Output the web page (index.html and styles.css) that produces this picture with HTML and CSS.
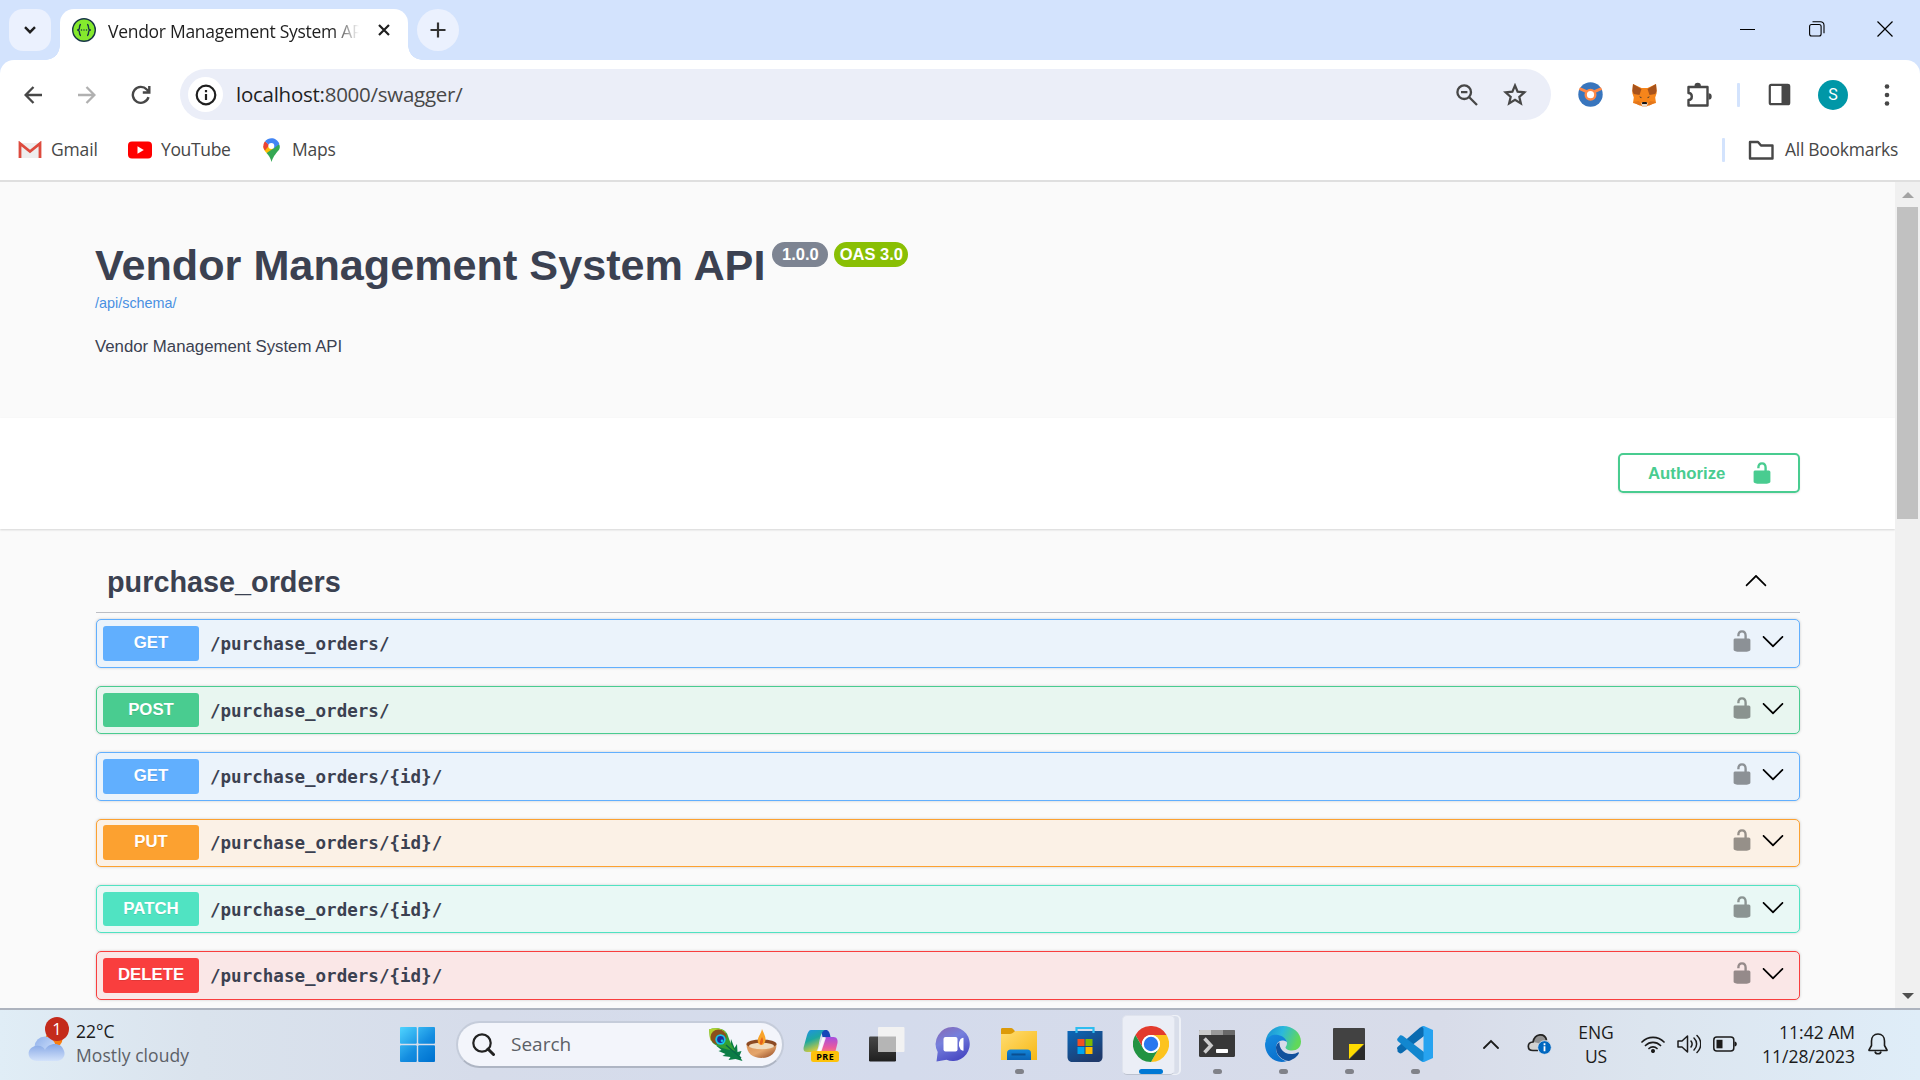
FILE: index.html
```html
<!DOCTYPE html>
<html lang="en">
<head>
<meta charset="utf-8">
<title>Vendor Management System API</title>
<link rel="stylesheet" href="styles.css">
</head>
<body>
<svg class="defs" width="0" height="0" aria-hidden="true">
  <symbol id="unlocked" viewBox="0 0 20 20"><path d="M15.8 8H14V5.6C14 2.703 12.665 1 10 1 7.334 1 6 2.703 6 5.6V6h2v-.801C8 3.754 8.797 3 10 3c1.203 0 2 .754 2 2.199V8H4c-.553 0-1 .646-1 1.199V17c0 .549.428 1.139.951 1.307l1.197.387C5.672 18.861 6.55 19 7.1 19h5.8c.549 0 1.428-.139 1.951-.307l1.196-.387c.524-.167.953-.757.953-1.306V9.199C17 8.646 16.352 8 15.8 8z"/></symbol>
  <symbol id="down" viewBox="0 0 20 20"><path d="M17.418 6.109c.272-.268.709-.268.979 0s.271.701 0 .969l-7.908 7.83c-.27.268-.707.268-.979 0l-7.908-7.83c-.27-.268-.27-.701 0-.969.271-.268.709-.268.979 0L10 13.25l7.418-7.141z"/></symbol>
  <symbol id="up" viewBox="0 0 20 20"><path d="M17.418 14.908c.272.27.709.27.979 0s.271-.697 0-.969l-7.908-7.83c-.27-.268-.707-.268-.979 0l-7.908 7.83c-.27.271-.27.699 0 .969.271.27.709.27.979 0L10 7.767l7.418 7.141z"/></symbol>
</svg>

<header class="tabstrip">
  <div class="tab-search"><svg width="12" height="8" viewBox="0 0 12 8"><path d="M1 1.2l5 5 5-5" fill="none" stroke="#1f1f1f" stroke-width="2.4"/></svg></div>
  <div class="tab">
    <svg width="24" height="24" viewBox="0 0 24 24"><circle cx="12" cy="12" r="11.3" fill="#85ea2d" stroke="#173647" stroke-width="1.4"/><path d="M9 6.500C6.800 6.500 8 10.500 7 11.300 6.600 11.700 6.200 12 5.200 12c1 0 1.400.300 1.800.700C8 13.500 6.800 17.500 9 17.500M15 6.500c2.200 0 1 4 2 4.800.4.400.8.700 1.800.700-1 0-1.400.300-1.800.700-1 .8.200 4.800-2 4.800" fill="none" stroke="#173647" stroke-width="1.400"/><g fill="#173647"><circle cx="9.500" cy="12" r=".75"/><circle cx="12" cy="12" r=".75"/><circle cx="14.500" cy="12" r=".75"/></g></svg>
    <span class="tab-title">Vendor Management System API</span>
    <svg class="tab-close" width="12" height="12" viewBox="0 0 12 12"><path d="M1 1l10 10M11 1L1 11" stroke="#1f1f1f" stroke-width="2.200"/></svg>
  </div>
  <div class="new-tab"><svg width="16" height="16" viewBox="0 0 16 16"><path d="M8 .5v15M.5 8h15" stroke="#333" stroke-width="2.200"/></svg></div>
  <div class="window-buttons">
    <svg width="16" height="16" viewBox="0 0 16 16"><path d="M0 8.500h15" stroke="#000"/></svg>
    <svg width="16" height="16" viewBox="0 0 16 16" fill="none" stroke="#000" stroke-width="1.100"><rect x=".6" y="3.500" width="11.500" height="11.500" rx="2"/><path d="M3.500.7h8a3.500 3.500 0 0 1 3.500 3.500v8"/></svg>
    <svg width="16" height="16" viewBox="0 0 16 16"><path d="M.5.500l15 15M15.500.500l-15 15" stroke="#000" stroke-width="1.200"/></svg>
  </div>
</header>

<section class="browser">
  <div class="toolbar">
    <div class="nav">
      <svg width="18" height="18" viewBox="0 0 18 18" fill="none" stroke="#474747" stroke-width="2.300"><path d="M18 9H2M9.500 1L1.600 9l7.900 8"/></svg>
      <svg width="18" height="18" viewBox="0 0 18 18" fill="none" stroke="#b0b0b0" stroke-width="2.300"><path d="M0 9h16M8.500 1l7.900 8-7.900 8"/></svg>
      <svg width="20" height="20" viewBox="0 0 20 20" fill="none" stroke="#474747" stroke-width="2.400"><path d="M17.500 12.200A8 8 0 1 1 15.800 4.500L17.500 6.300M18.300 1v6.500h-6.500"/></svg>
    </div>
    <div class="omnibox">
      <div class="site-info"><svg width="22" height="22" viewBox="0 0 22 22"><circle cx="11" cy="11" r="9.300" fill="none" stroke="#1f1f1f" stroke-width="2.200"/><path d="M11 10v6M11 6v2.200" stroke="#1f1f1f" stroke-width="2.200"/></svg></div>
      <span class="url"><b>localhost:</b>8000/swagger/</span>
      <svg width="22" height="22" viewBox="0 0 22 22" fill="none" stroke="#474747" stroke-width="2.300"><circle cx="8.200" cy="8.200" r="6.800"/><path d="M13 13l8 8M5 8.200h6.400"/></svg>
      <svg class="star" width="24" height="24" viewBox="0 0 24 24" fill="none" stroke="#474747" stroke-width="2.200"><path d="M12 2.500l2.600 6.200 6.900.6-5.200 4.500 1.600 6.700-5.900-3.600-5.900 3.600 1.600-6.700-5.200-4.500 6.900-.6z"/></svg>
    </div>
    <div class="extensions">
      <svg width="25" height="25" viewBox="0 0 25 25"><circle cx="12.500" cy="12.500" r="12.200" fill="#3875bd"/><path d="M1.500 6.500l7 3.200M23.500 6.500l-7 3.200" stroke="#ff8947" stroke-width="3"/><circle cx="12.500" cy="12.700" r="4.800" fill="#fff" stroke="#ff8947" stroke-width="2.400"/></svg>
      <svg width="25" height="24" viewBox="0 0 25 24"><path d="M1 1l8.500 4h6L24 1l.7 9-1.500 4.500L24 20l-6.500 2-3 1.500h-4L7.500 22 1 20l.8-5.500L.300 10z" fill="#f6851b"/><path d="M1 1l8.500 5L7.500 12 1.800 11 .300 8zM24 1l-8.500 5 2 6 5.700-1 1.500-3z" fill="#a8531b"/><path d="M1 19l6-1 2.500 4-2 .5zM24 19l-6-1-2.500 4 2 .5z" fill="#e2761b"/><path d="M9.300 20.500l1-1.500h4.400l1 1.500-1 3h-4.400z" fill="#e5d8cc"/><path d="M10.300 19h4.400l.3 2h-5z" fill="#161616"/><path d="M7 13.500l2.500.5-.3 1.300zM18 13.500l-2.500.5.3 1.300z" fill="#333"/></svg>
      <svg width="26" height="26" viewBox="0 0 26 26"><path d="M2.500 5h19v18.500h-19v-5.500c2 0 3.300-1.600 3.300-3.500S4.500 11 2.500 11z" fill="none" stroke="#474747" stroke-width="2.400" stroke-linejoin="round"/><path d="M8.500 4a3.200 3.200 0 0 1 6.400 0zM22.500 11.200a3.200 3.200 0 0 1 0 6.400z" fill="#474747"/></svg>
      <i class="divider"></i>
      <svg width="23" height="23" viewBox="0 0 23 23"><rect x="1.800" y="1.800" width="19.400" height="19.400" rx="1.500" fill="none" stroke="#474747" stroke-width="2.200"/><path d="M13.500 1.500h8v20h-8z" fill="#474747"/></svg>
      <span class="avatar">S</span>
      <svg width="6" height="24" viewBox="0 0 6 24" fill="#474747"><circle cx="3" cy="3.500" r="2.300"/><circle cx="3" cy="12" r="2.300"/><circle cx="3" cy="20.500" r="2.300"/></svg>
    </div>
  </div>
  <div class="bookmarks">
    <svg width="24" height="18" viewBox="0 0 24 18"><path d="M2 2h20v15H2z" fill="#eee"/><path d="M2 17V2.500l10 8 10-8V17" fill="none" stroke="#dd4b3e" stroke-width="2.800"/></svg>
    <span class="bm-gmail">Gmail</span>
    <svg width="24" height="18" viewBox="0 0 24 18"><rect y=".5" width="24" height="17" rx="4" fill="#f00"/><path d="M9.500 5.300v7.400L15.800 9z" fill="#fff"/></svg>
    <span class="bm-youtube">YouTube</span>
    <svg width="17" height="24" viewBox="0 0 17 24"><path d="M14.500 13.500C11 18 10 19.500 8.500 24 7.500 20 6 17.500 3.500 15l9-10 3.800 1.500c1.200 3 .2 5-1.800 7z" fill="#34a853"/><path d="M3.500 15C1 12 .2 10.500.300 8l5.500-.3 5 2.500z" fill="#fbbc04"/><path d="M.300 8c.2-2.500 1-4 1.800-4.800L6.500 7 2 12.500C.8 11 .300 9.500.300 8z" fill="#ea4335"/><path d="M2 3.200C6-1.200 13.800-.8 16.300 6L11 10.500 5.500 6.500z" fill="#4285f4"/><circle cx="8.300" cy="8" r="3" fill="#fff"/></svg>
    <span class="bm-maps">Maps</span>
    <i class="divider bm-divider"></i>
    <svg width="26" height="20" viewBox="0 0 26 20"><path d="M2 2h8l3 3.500h11.500V18.500H2z" fill="none" stroke="#474747" stroke-width="2.400" stroke-linejoin="round"/></svg>
    <span class="bm-all">All Bookmarks</span>
  </div>
</section>

<div class="viewport">
  <main class="page">
    <section class="info">
      <h1><span>Vendor Management System API</span><small class="version">1.0.0</small><small class="oas">OAS 3.0</small></h1>
      <a class="schema">/api/schema/</a>
      <p>Vendor Management System API</p>
    </section>
    <section class="auth">
      <button class="authorize"><span>Authorize</span><svg width="24" height="24"><use href="#unlocked"/></svg></button>
    </section>
    <section class="operations">
      <h2><span>purchase_orders</span><svg width="24" height="24"><use href="#up"/></svg></h2>
      <div class="op get"><span class="method">GET</span><span class="path">/purchase_orders/</span><svg class="lock"><use href="#unlocked"/></svg><svg class="arrow"><use href="#down"/></svg></div>
      <div class="op post"><span class="method">POST</span><span class="path">/purchase_orders/</span><svg class="lock"><use href="#unlocked"/></svg><svg class="arrow"><use href="#down"/></svg></div>
      <div class="op get"><span class="method">GET</span><span class="path">/purchase_orders/{id}/</span><svg class="lock"><use href="#unlocked"/></svg><svg class="arrow"><use href="#down"/></svg></div>
      <div class="op put"><span class="method">PUT</span><span class="path">/purchase_orders/{id}/</span><svg class="lock"><use href="#unlocked"/></svg><svg class="arrow"><use href="#down"/></svg></div>
      <div class="op patch"><span class="method">PATCH</span><span class="path">/purchase_orders/{id}/</span><svg class="lock"><use href="#unlocked"/></svg><svg class="arrow"><use href="#down"/></svg></div>
      <div class="op delete"><span class="method">DELETE</span><span class="path">/purchase_orders/{id}/</span><svg class="lock"><use href="#unlocked"/></svg><svg class="arrow"><use href="#down"/></svg></div>
    </section>
  </main>
  <aside class="scrollbar">
    <svg width="12" height="6" viewBox="0 0 12 6"><path d="M0 6l6-6 6 6z" fill="#a3a3a3"/></svg>
    <div class="thumb"></div>
    <svg class="scroll-down" width="12" height="6" viewBox="0 0 12 6"><path d="M0 0l6 6 6-6z" fill="#505050"/></svg>
  </aside>
</div>

<footer class="taskbar">
  <div class="weather">
    <div class="weather-icon">
      <svg width="38" height="32" viewBox="0 0 38 32"><defs><linearGradient id="cl" x1="0" y1="0" x2="1" y2="1"><stop offset="0" stop-color="#8fb0ea"/><stop offset=".5" stop-color="#b4ccf4"/><stop offset="1" stop-color="#dbe8fc"/></linearGradient><linearGradient id="cl2" x1="0" y1="0" x2="0" y2="1"><stop offset="0" stop-color="#86a8e6"/><stop offset="1" stop-color="#d3e2fa"/></linearGradient></defs><circle cx="26" cy="8" r="8.500" fill="#f77f12"/><circle cx="17" cy="16" r="10.500" fill="url(#cl)"/><path d="M8 15c4-1 8 1 9 4 3-7 16-9 19 1 2 5-2 10-8 10H9C-2 30-2 16 8 15z" fill="url(#cl2)"/></svg>
      <span class="alert">1</span>
    </div>
    <div class="weather-text"><span>22°C</span><span>Mostly cloudy</span></div>
  </div>
  <svg class="start" width="35" height="35" viewBox="0 0 35 35"><defs><linearGradient id="win" gradientUnits="userSpaceOnUse" x1="0" y1="0" x2="30" y2="35"><stop offset="0" stop-color="#4fd4ff"/><stop offset=".6" stop-color="#148de0"/><stop offset="1" stop-color="#0074d1"/></linearGradient></defs><g fill="url(#win)"><rect width="16.800" height="16.800" rx="1"/><rect x="18.200" width="16.800" height="16.800" rx="1"/><rect y="18.200" width="16.800" height="16.800" rx="1"/><rect x="18.200" y="18.200" width="16.800" height="16.800" rx="1"/></g></svg>
  <div class="search">
    <svg width="23" height="23" viewBox="0 0 23 23" fill="none" stroke="#222"><circle cx="10" cy="10" r="8.700" stroke-width="2.200"/><path d="M16 16l5.500 5.500" stroke-width="3" stroke-linecap="round"/></svg>
    <span>Search</span>
    <svg width="35" height="33" viewBox="0 0 35 33"><path d="M18 10l4.500 7 .5-6 3.500 9 2.500-4 .5 8 4-1-2 5 3 5-7-2-7 1 2-3-8-1 3-2-7-3 3-1-5-4z" fill="#0b7d45"/><path d="M1 1.500C8-1 18 0 20 8c2 6 4 10 7 15-9-2-16-3-21-7C1 12 2 7 1 1.500z" fill="#35a033"/><path d="M1 1.500C7-1 15 0 18 5L3 13C1 10 2 6 1 1.500z" fill="#b5d32c"/><ellipse cx="10.500" cy="9" rx="8" ry="7.500" fill="#8a501c"/><circle cx="12.500" cy="11.500" r="5.200" fill="#16c5e8"/><circle cx="12.500" cy="11.500" r="3.400" fill="#1d2c9b"/><circle cx="14" cy="12.800" r="1.300" fill="#16c5e8"/><path d="M18 17l15 13" stroke="#0a6a48" stroke-width="1.500"/></svg>
    <svg width="31" height="31" viewBox="0 0 31 31"><defs><linearGradient id="bowl" x1="0" y1="0" x2="1" y2="1"><stop offset="0" stop-color="#dc9558"/><stop offset=".5" stop-color="#e4a56c"/><stop offset="1" stop-color="#8d431f"/></linearGradient></defs><path d="M.500 15c0 9 6 14 15 14s15-5 15-14z" fill="url(#bowl)"/><ellipse cx="15.500" cy="15" rx="15" ry="4.500" fill="#8b4a24"/><ellipse cx="15.500" cy="17" rx="12.500" ry="3.300" fill="#f0dcc0"/><path d="M16 0c2 5 4 8 3.500 11-.3 3-2 5-4.200 5-2.800 0-4.300-3-3.300-6C12.500 7 15 5 16 0z" fill="#f8a32a"/><path d="M16 8c2 4 1 6-1 8-2-2-1-4 1-8z" fill="#e8641b"/></svg>
  </div>
  <nav class="apps">
    <div class="app"><svg width="36" height="36" viewBox="0 0 36 36"><defs><linearGradient id="cp1" x1="0" y1="0" x2=".4" y2="1"><stop offset="0" stop-color="#2090e8"/><stop offset=".5" stop-color="#1da8a0"/><stop offset="1" stop-color="#d9cc3a"/></linearGradient><linearGradient id="cp2" x1="0" y1="0" x2="0" y2="1"><stop offset="0" stop-color="#a44ee0"/><stop offset=".6" stop-color="#ec5b9c"/><stop offset="1" stop-color="#f89a5b"/></linearGradient></defs><path d="M18 4h5c2.500 0 3.500 2 4.500 7h-8z" fill="#1647b8"/><path d="M8 4h14c-3 1-4.500 5-6 13-1 6-2 9-5 9H4c-3.500 0-4-3-3-6L4 9c1-3 2-5 4-5z" fill="url(#cp1)"/><path d="M22 11h8.500c3.500 0 4.500 3 4 6l-2 8c-1 3-2 4-5 4H15c3-1 5-12 7-18z" fill="url(#cp2)"/><path d="M19.500 11.500h3.500L18.500 25h-4z" fill="#fff" opacity=".85"/><rect x="8" y="25" width="28" height="11" rx="2.500" fill="#fdc20a"/><text x="22.300" y="34" text-anchor="middle" class="pre">PRE</text></svg></div>
    <div class="app"><svg width="36" height="36" viewBox="0 0 36 36"><defs><linearGradient id="tv" x1="0" y1="0" x2="0" y2="1"><stop offset="0" stop-color="#474747"/><stop offset="1" stop-color="#202020"/></linearGradient></defs><rect y="10.500" width="27" height="25" rx="1.200" fill="url(#tv)"/><rect x="9" y="1" width="26.500" height="25" rx="1" fill="#f2f2f2"/><rect x="9" y="10.500" width="18" height="15.500" fill="#b5b5b5"/></svg></div>
    <div class="app"><svg width="36" height="36" viewBox="0 0 36 36"><defs><linearGradient id="chat" x1="0" y1="0" x2=".5" y2="1"><stop offset="0" stop-color="#8866b0"/><stop offset=".45" stop-color="#7680dd"/><stop offset="1" stop-color="#4b4cc4"/></linearGradient></defs><path d="M18.500 1a17 17 0 1 1-7 32.800L1.500 35.500l1.200-9.500A17 17 0 0 1 18.500 1z" fill="url(#chat)"/><rect x="8.500" y="11" width="14" height="14.500" rx="2" fill="#fff"/><path d="M24 16.500l1.500-3.500q3-2 3-1v12.500q0 1-3-1L24 20z" fill="#fff"/></svg></div>
    <div class="app running"><svg width="36" height="36" viewBox="0 0 36 36"><defs><linearGradient id="fe" x1="0" y1="0" x2="1" y2="1"><stop offset="0" stop-color="#ffdd73"/><stop offset="1" stop-color="#f7b814"/></linearGradient><linearGradient id="fb" x1="0" y1="0" x2="0" y2="1"><stop offset="0" stop-color="#1285d8"/><stop offset="1" stop-color="#0b63b5"/></linearGradient></defs><path d="M0 3.500C0 2.500.5 2 1.500 2H10c1.500 0 2.500 1 4.500 4.500L10 9H0z" fill="#dc9a08"/><path d="M0 8h9c3 0 4-3 6-3h21v29H0z" fill="url(#fe)"/><path d="M6 34V27c0-2 1.500-3.500 3.500-3.500h17c2 0 3.500 1.500 3.500 3.500v7z" fill="url(#fb)"/><path d="M10.500 28.500h14" stroke="#0a4f91" stroke-width="2"/></svg></div>
    <div class="app"><svg width="36" height="36" viewBox="0 0 36 36"><defs><linearGradient id="st" x1="0" y1="0" x2=".6" y2="1"><stop offset="0" stop-color="#0b68b9"/><stop offset="1" stop-color="#1f3a6b"/></linearGradient></defs><path d="M.5 5h35v26c0 3-2 5-5 5h-25c-3 0-5-2-5-5z" fill="url(#st)"/><path d="M9.500 7V2h17v5" fill="none" stroke="#2dbdf0" stroke-width="2.200"/><path d="M10.500 13h7v7h-7z" fill="#f25022"/><path d="M18.500 13h7v7h-7z" fill="#7fba00"/><path d="M10.500 21h7v7h-7z" fill="#00a4ef"/><path d="M18.500 21h7v7h-7z" fill="#ffb900"/></svg></div>
    <div class="app active"><svg width="36" height="36" viewBox="0 0 36 36"><circle cx="18" cy="18" r="17.500" fill="#fff"/><path d="M18 9h15.600A18 18 0 0 0 2.400 9l7.800 13.500A9 9 0 0 1 18 9z" fill="#e33b2e"/><path d="M25.800 22.500L18 36A18 18 0 0 0 33.600 9H18a9 9 0 0 1 7.800 13.500z" fill="#fcc31e"/><path d="M10.200 22.500L2.400 9A18 18 0 0 0 18 36l7.800-13.500a9 9 0 0 1-15.600 0z" fill="#229342"/><circle cx="18" cy="18" r="9" fill="#fff"/><circle cx="18" cy="18" r="7.200" fill="#2a78ef"/></svg></div>
    <div class="app running"><svg width="36" height="36" viewBox="0 0 36 36"><rect y="4" width="36" height="27" rx="1.500" fill="#383838"/><path d="M0 9V5.500C0 4.500.5 4 1.500 4H12v5z" fill="#cacaca"/><path d="M12 4h12v5H12z" fill="#999"/><path d="M24 4h10.500c1 0 1.500.5 1.500 1.500V9H24z" fill="#696969"/><path d="M5.500 12.500l6.500 7-6.500 7" fill="none" stroke="#ccc" stroke-width="3.500"/><rect x="17" y="23" width="12" height="4" rx=".8" fill="#fff"/></svg></div>
    <div class="app running"><svg width="36" height="36" viewBox="0 0 36 36"><defs><linearGradient id="eg" x1="0" y1="0" x2="1" y2=".3"><stop offset="0" stop-color="#168bd3"/><stop offset=".5" stop-color="#2bb8dd"/><stop offset="1" stop-color="#61d85a"/></linearGradient><linearGradient id="eb" x1="0" y1="0" x2=".4" y2="1"><stop offset="0" stop-color="#168ce0"/><stop offset="1" stop-color="#0b71cd"/></linearGradient></defs><path d="M.5 15C2 6 9 0 18 0c10 0 18 7 18 15.500 0 6-4 9-9 9-4 0-6.500-1.500-6.500-3 0-1 1.500-1.500 1.500-4.500 0-3-3-5-7-5C8 12 2 15 .5 15z" fill="url(#eg)"/><path d="M0 18C1 11 7 8 13 9c5 1 8 4 9 7-7-4-11 1-11 6 0 7 5 12 11 13-12 4-22-6-22-17z" fill="url(#eb)"/><path d="M14.500 16C11 18 11 21 11 22c0 8 8 13 13 13 5-2 9-5 10-8 0-1-1-1-2-.3-6 3-13 1-16-4-1.500-2.500-1.500-5-1.500-6.700z" fill="#11509d"/></svg></div>
    <div class="app running"><svg width="36" height="36" viewBox="0 0 36 36"><rect x="2" y="2" width="32" height="32" rx="1" fill="#424242"/><path d="M18 18h15L18 33z" fill="#fedb00"/><path d="M34 18v16H18z" fill="#2b2b2b"/></svg></div>
    <div class="app running"><svg width="36" height="36" viewBox="0 0 36 36"><path d="M.5 23.500c-1-1 0-2.500 0-2.500L23 1.500 27 0v10L5 27c-2 1-3 0-4.500-1.500z" fill="#0a6bb0"/><path d="M.5 12.500L3 9.500c1-.5 2 0 3 .5l21 16v10l-4-1.500L.7 15c-.7-1-.7-1.700-.2-2.500z" fill="#1287cf"/><path d="M27 0l9 4v28l-9 4c-1 0-2 0-3-1 1.500 0 2.500-.5 2.500-2V3c0-1.500-1-2-2.500-2 1-1 2-1 3-1z" fill="#27a3f0"/></svg></div>
  </nav>
  <div class="tray">
    <svg class="t-chev" width="16" height="10" viewBox="0 0 16 10"><path d="M1 9l7-7 7 7" fill="none" stroke="#1b1b1b" stroke-width="1.800" stroke-linecap="round"/></svg>
    <svg class="t-cloud" width="25" height="22" viewBox="0 0 25 22"><path d="M6 17.500c-6 0-6.500-8 0-8.500C8-1 19 0 19.500 7l3 2-6 8.500z" fill="#d2d2d2"/><path d="M6 9l5 1 7 5 4-6-2.500-2C19 0 8-1 6 9z" fill="#919191"/><path d="M11 17.500H6c-6 0-6.500-8 0-8.500C8-.5 18 0 19.500 7" fill="none" stroke="#222" stroke-width="1.700"/><circle cx="17.500" cy="14.500" r="6.800" fill="#0067c0" stroke="#dde3ee" stroke-width=".8"/><path d="M17.500 13.300v5M17.500 10.200v2" stroke="#fff" stroke-width="1.800"/></svg>
    <div class="lang"><span>ENG</span><span>US</span></div>
    <svg class="t-wifi" width="24" height="18" viewBox="0 0 24 18" fill="none" stroke="#1b1b1b" stroke-width="1.700" stroke-linecap="round"><path d="M1 7a15.500 15.500 0 0 1 22 0M4.500 10.500a10.600 10.600 0 0 1 15 0M8 13.500a5.700 5.700 0 0 1 8 0"/><circle cx="12" cy="16" r="1.200" fill="#1b1b1b"/></svg>
    <svg class="t-sound" width="24" height="20" viewBox="0 0 24 20" fill="none" stroke="#1b1b1b" stroke-width="1.500" stroke-linejoin="round" stroke-linecap="round"><path d="M1 7h4l5.500-5v16L5 13H1zM14 7c1.500 2 1.500 4 0 6M17 4c3.500 3.500 3.500 8.500 0 12M20 1.500c5 5 5 12 0 17"/></svg>
    <svg class="t-battery" width="24" height="16" viewBox="0 0 24 16"><rect x=".8" y="1" width="20" height="14" rx="3" fill="none" stroke="#1b1b1b" stroke-width="1.500"/><rect x="3.500" y="3.800" width="6" height="8.500" fill="#1b1b1b"/><path d="M21.500 5.500c1.500 0 2.300 1 2.300 2.500s-.8 2.500-2.300 2.500z" fill="#1b1b1b"/></svg>
    <div class="clock"><span>11:42 AM</span><span>11/28/2023</span></div>
    <svg class="t-bell" width="20" height="22" viewBox="0 0 20 22"><path d="M10 1C6 1 3.500 4 3.500 8v4.500L1 17v.5h18V17l-2.500-4.500V8C16.500 4 14 1 10 1z" fill="none" stroke="#1b1b1b" stroke-width="1.600" stroke-linejoin="round"/><path d="M7 18.500c.5 3 5.500 3 6 0" fill="none" stroke="#1b1b1b" stroke-width="1.600"/></svg>
  </div>
</footer>
</body>
</html>
```
FILE: styles.css
```css
* { box-sizing: border-box; }
body { margin: 0; width: 1920px; height: 1080px; overflow: hidden; display: flex; flex-direction: column; font-family: "Open Sans", "Noto Sans", sans-serif; background: #d3e3fd; }
svg { display: block; flex: none; }
span { white-space: nowrap; }
.defs { position: absolute; }

.tabstrip { display: flex; height: 60px; padding: 9px 27px 0 9px; background: #d3e3fd; }
.tab-search { width: 42px; height: 42px; border-radius: 14px; background: #ebf1fe; display: grid; place-items: center; margin-right: 9px; }
.tab { position: relative; width: 348px; height: 51px; border-radius: 14px 14px 0 0; background: #fff; display: flex; align-items: center; padding: 0 18px 9px 12px; }
.tab::before, .tab::after { content: ""; position: absolute; bottom: 0; width: 14px; height: 14px; }
.tab::before { left: -14px; background: radial-gradient(circle at 0 0, transparent 13.500px, #fff 14px); }
.tab::after { right: -14px; background: radial-gradient(circle at 100% 0, transparent 13.500px, #fff 14px); }
.tab-title { margin-left: 12px; width: 251px; overflow: hidden; font-size: 17.500px; letter-spacing: -0.28px; color: #1f1f1f; mask-image: linear-gradient(90deg, #000 225px, transparent 251px); padding-top: 1px; }
.tab-close { margin-left: auto; }
.new-tab { width: 42px; height: 42px; border-radius: 50%; background: #ebf1fe; display: grid; place-items: center; margin-left: 9px; }
.window-buttons { margin-left: auto; display: flex; gap: 52.500px; padding-top: 12px; }

.browser { height: 122px; background: #fff; border-radius: 14px 14px 0 0; border-bottom: 2px solid #dfdfdf; }
.toolbar { height: 69px; display: flex; align-items: center; padding-left: 24px; padding-right: 30px; }
.nav { display: flex; align-items: center; gap: 35.500px; width: 156px; }
.omnibox { width: 1371px; height: 51px; border-radius: 26px; background: #ebeef8; display: flex; align-items: center; padding: 0 24px 0 8px; }
.site-info { width: 35px; height: 35px; border-radius: 50%; background: #fff; display: grid; place-items: center; }
.url { margin-left: 13px; font-size: 20.500px; letter-spacing: -0.26px; color: #474747; flex: 1; padding-bottom: 2px; }
.url b { font-weight: 400; color: #1f1f1f; }
.star { margin-left: 25px; }
.extensions { margin-left: auto; display: flex; align-items: center; }
.extensions svg:nth-child(2) { margin-left: 29px; }
.extensions svg:nth-child(3) { margin-left: 29px; }
.divider { width: 3px; height: 24px; border-radius: 1px; background: #d3e3fd; }
.extensions .divider { margin: 0 28px 0 25px; }
.avatar { width: 30px; height: 30px; border-radius: 50%; background: #0097a7; color: #fff; font: 16px/30px Roboto, sans-serif; text-align: center; margin: 1px 36px 0 27px; }
.bookmarks { height: 42px; display: flex; align-items: center; padding: 0 22px 0 18px; font-size: 17.500px; color: #474747; }
.bookmarks span { padding-bottom: 2px; }
.bm-gmail { width: 77px; margin-left: 9px; letter-spacing: -0.15px; }
.bm-youtube { width: 102px; margin-left: 9px; letter-spacing: -0.35px; }
.bm-maps { margin-left: 12px; letter-spacing: -0.2px; }
.bm-divider { margin-left: auto; margin-right: 23px; }
.bm-all { margin-left: 11px; letter-spacing: -0.28px; }

.viewport { height: 826px; display: flex; background: #fafafa; }
.page { width: 1895px; overflow: hidden; font-family: "Liberation Sans", sans-serif; color: #3b4151; }
.info { height: 236px; padding: 60px 95px 0; }
.info h1 { margin: 0; height: 49px; line-height: 47px; font-size: 43.200px; display: flex; }
.info small { height: 25px; border-radius: 13px; line-height: 25px; color: #fff; font-size: 16.500px; text-align: center; }
.version { width: 56px; margin-left: 7px; background: #7d8492; }
.oas { width: 74px; margin-left: 6px; background: #89bf04; }
.schema { display: block; font-size: 14.400px; line-height: 17px; margin-top: 4px; color: #4990e2; }
.info p { margin: 25px 0 0; font-size: 16.800px; line-height: 20px; }
.auth { height: 111px; padding: 35px 95px 0; background: #fff; box-shadow: 0 1px 2px rgba(0,0,0,.15); display: flex; justify-content: flex-end; }
.authorize { width: 182px; height: 40px; padding: 0 24px 0 28px; border: 2px solid #49cc90; border-radius: 5px; background: transparent; color: #49cc90; font: bold 16.800px "Liberation Sans", sans-serif; display: flex; align-items: center; justify-content: space-between; box-shadow: 0 1px 2px rgba(0,0,0,.1); fill: #49cc90; }
.authorize span { padding-top: 2px; }
.operations { padding: 32px 95px 0 96px; }
.operations h2 { margin: 0 0 6.300px; height: 52px; border-bottom: 1px solid #bcbec4; padding: 0 32px 8px 11px; font-size: 28.800px; display: flex; align-items: center; justify-content: space-between; }
.operations h2 svg { margin-bottom: 6px; }
.op { height: 48.400px; margin-bottom: 18.020px; border: 1px solid; border-radius: 5px; display: flex; align-items: center; padding: 0 14px 0 6px; box-shadow: 0 0 3px rgba(0,0,0,.19); }
.method { width: 96px; height: 34.600px; border-radius: 3px; color: #fff; font-weight: 700; font-size: 16.800px; line-height: 34.600px; text-align: center; text-shadow: 0 1px 0 rgba(0,0,0,.1); }
.path { margin-left: 11px; flex: 1; font: bold 17.550px "DejaVu Sans Mono", monospace; padding-top: 1.500px; }
.lock { width: 24px; height: 24px; opacity: .4; margin: 0 7px 4.500px 0; }
.arrow { width: 24px; height: 24px; margin-bottom: 4.500px; fill: #000; }
.get { border-color: #61affe; background: #ebf3fb; }
.get .method { background: #61affe; }
.post { border-color: #49cc90; background: #e8f6f0; }
.post .method { background: #49cc90; }
.put { border-color: #fca130; background: #fbf1e6; }
.put .method { background: #fca130; }
.patch { border-color: #50e3c2; background: #e9f8f5; }
.patch .method { background: #50e3c2; }
.delete { border-color: #f93e3e; background: #fae7e7; }
.delete .method { background: #f93e3e; }
.scrollbar { width: 25px; background: #f0f0f0; display: flex; flex-direction: column; align-items: center; padding: 10px 0 9px; }
.thumb { width: 21px; height: 312px; background: #c1c1c1; margin-top: 9px; }
.scroll-down { margin-top: auto; }

.taskbar { height: 72px; border-top: 2px solid #adb3be; padding-bottom: 2px; display: flex; align-items: center; color: #1b1b1b; background: linear-gradient(90deg, #e0edf6 0, #dae3ed 200px, #d6dcea 480px, #d4dbec 900px, #d8dce9 1440px, #dce5ef 1650px, #dfedf8 1920px); font-size: 17.500px; }
.weather { display: flex; width: 400px; padding-left: 28px; }
.weather-icon { position: relative; width: 48px; height: 50px; padding-top: 12px; }
.alert { position: absolute; left: 17px; top: -2px; width: 24px; height: 24px; border-radius: 50%; background: #c42b1c; color: #fff; text-align: center; font-size: 16.500px; line-height: 23px; }
.weather-text, .lang, .clock { display: flex; flex-direction: column; line-height: 24px; }
.weather-text span:last-child { color: #5c6067; letter-spacing: .08px; }
.search { width: 328px; height: 47px; margin-left: 21px; border: 2px solid #c5ccda; border-bottom-color: #aeb5c3; border-radius: 24px; background: #f3f5fb; display: flex; align-items: center; padding-left: 14px; }
.search span { width: 197px; margin-left: 16px; font-size: 19px; color: #5c5f66; }
.search svg + svg { margin-left: 3px; }
.apps { display: flex; margin-left: 4px; }
.app { position: relative; width: 66px; height: 70px; display: grid; place-items: center; padding-bottom: 0; }
.app svg { position: relative; }
.running::after, .active::after { content: ""; position: absolute; bottom: 5px; left: 29px; width: 9px; height: 5px; border-radius: 3px; background: #808289; }
.active::after { left: 21px; width: 24px; background: #0078d4; }
.active::before { content: ""; position: absolute; left: 4px; top: 6px; width: 51px; height: 58px; border-radius: 5px; background: #ebeef6; border: 1px solid #dfe3ed; border-bottom-color: #bcc2cf; box-shadow: 5px 0 0 -1px #d9deea, 6px 0 0 0 #eef1f7; }
.pre { font: bold 9px "Open Sans", sans-serif; letter-spacing: .5px; }
.tray { display: flex; align-items: center; flex: 1; margin-left: 35px; }
.t-cloud { margin-left: 28px; }
.lang { margin-left: 26px; width: 36px; align-items: center; letter-spacing: -0.1px; }
.t-wifi { margin-left: 27px; }
.t-sound { margin-left: 12px; }
.t-battery { margin-left: 12px; }
.clock { margin-left: auto; align-items: flex-end; }
.t-bell { margin: 0 32px 0 13px; }
```
